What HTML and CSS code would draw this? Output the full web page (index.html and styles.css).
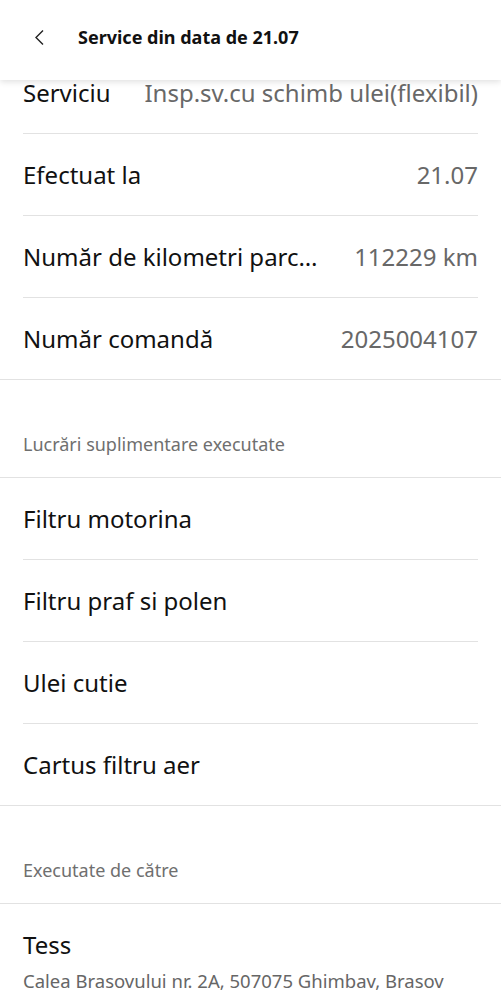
FILE: index.html
```html
<!DOCTYPE html>
<html>
<head>
    <title>Service din data de 21.07</title>
    <link rel="stylesheet" href="styles.css">
</head>
<body>
    <div class="screen">
        <div class="topBar">
            <button class="backBtn">
                <svg width="12" height="17" viewBox="0 0 12 17">
                    <path d="M10 1.5 L3 8.5 L10 15.5" fill="none" stroke="#222" stroke-width="1.4"/>
                </svg>
            </button>
            <span class="title">Service din data de 21.07</span>
        </div>
        <div class="content">
            <div class="row inset">
                <span class="label">Serviciu</span>
                <span class="value">Insp.sv.cu schimb ulei(flexibil)</span>
            </div>
            <div class="row inset">
                <span class="label">Efectuat la</span>
                <span class="value">21.07</span>
            </div>
            <div class="row inset">
                <span class="label cut">Număr de kilometri parcurși</span>
                <span class="value">112229 km</span>
            </div>
            <div class="row full">
                <span class="label">Număr comandă</span>
                <span class="value">2025004107</span>
            </div>

            <div class="section">Lucrări suplimentare executate</div>
            <div class="row inset"><span class="label">Filtru motorina</span></div>
            <div class="row inset"><span class="label">Filtru praf si polen</span></div>
            <div class="row inset"><span class="label">Ulei cutie</span></div>
            <div class="row full"><span class="label">Cartus filtru aer</span></div>

            <div class="section">Executate de către</div>
            <div class="dealer">
                <div class="dealerName">Tess</div>
                <div class="dealerAddr">Calea Brasovului nr. 2A, 507075 Ghimbav, Brasov</div>
            </div>
        </div>
    </div>
</body>
</html>
```

FILE: styles.css
```css
body{
    margin: 0px;
    background-color: #ffffff;
    font-family: "Noto Sans", "Open Sans", sans-serif;
    color: #111111;
}

.screen{
    width: 501px;
    height: 999px;
    overflow: hidden;
    display: flex;
    flex-direction: column;
}

.topBar{
    position: relative;
    z-index: 2;
    display: flex;
    align-items: center;
    height: 80px;
    flex-shrink: 0;
    background-color: #ffffff;
    box-shadow: 0px 2px 6px rgba(0, 0, 0, 0.12);
}

.backBtn{
    display: flex;
    align-items: center;
    justify-content: center;
    width: 44px;
    height: 44px;
    margin-left: 17px;
    margin-right: 17px;
    margin-top: -6px;
    padding: 0px;
    border: none;
    background: none;
}

.title{
    font-size: 18px;
    font-weight: 700;
    margin-top: -6px;
    color: #111111;
}

.content{
    margin-top: -28px;
}

.row{
    display: flex;
    align-items: center;
    justify-content: space-between;
    gap: 28px;
    height: 81px;
    padding: 0px 23px;
    font-size: 24px;
    position: relative;
}

.row::after{
    content: "";
    position: absolute;
    bottom: -1px;
    height: 1px;
    background-color: #e2e2e2;
}

.row.inset::after{
    left: 23px;
    right: 23px;
}

.row.full::after{
    left: 0px;
    right: 0px;
}

.row + .row{
    margin-top: 1px;
}

.label{
    white-space: nowrap;
    color: #111111;
}

.cut{
    overflow: hidden;
    text-overflow: ellipsis;
    min-width: 0;
}

.value{
    white-space: nowrap;
    flex-shrink: 0;
    color: #686868;
}

.section{
    height: 98px;
    margin-top: 1px;
    border-bottom: 1px solid #e2e2e2;
    padding: 0px 23px 21px 23px;
    display: flex;
    align-items: flex-end;
    box-sizing: border-box;
    font-size: 18px;
    color: #6f6f6f;
}

.dealer{
    padding: 25px 23px 0px 23px;
}

.dealerName{
    font-size: 24px;
    color: #111111;
    line-height: 32px;
}

.dealerAddr{
    margin-top: 7px;
    font-size: 18.5px;
    color: #666666;
    white-space: nowrap;
}
```
